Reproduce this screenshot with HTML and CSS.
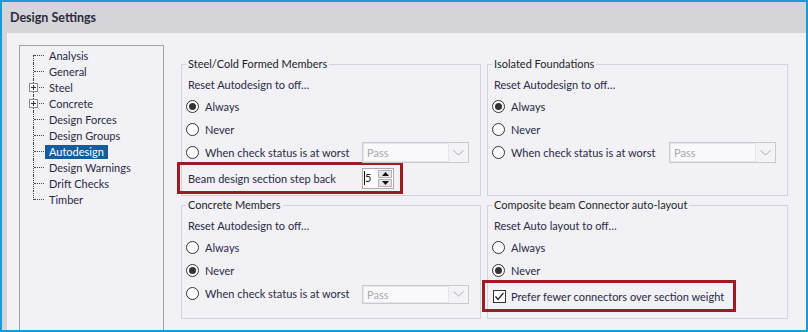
FILE: index.html
```html
<!DOCTYPE html>
<html>
<head>
<meta charset="utf-8">
<link rel="stylesheet" href="styles.css">
</head>
<body>
<div class="window">
  <div class="titlebar">Design Settings</div>
  <div class="content">
    <div class="tree">
      <ul class="tree-list">
        <li class="tree-item"><span class="tree-label">Analysis</span></li>
        <li class="tree-item"><span class="tree-label">General</span></li>
        <li class="tree-item has-children"><span class="expander"></span><span class="tree-label">Steel</span></li>
        <li class="tree-item has-children"><span class="expander"></span><span class="tree-label">Concrete</span></li>
        <li class="tree-item"><span class="tree-label">Design Forces</span></li>
        <li class="tree-item"><span class="tree-label">Design Groups</span></li>
        <li class="tree-item"><span class="tree-label selected">Autodesign</span></li>
        <li class="tree-item"><span class="tree-label">Design Warnings</span></li>
        <li class="tree-item"><span class="tree-label">Drift Checks</span></li>
        <li class="tree-item"><span class="tree-label">Timber</span></li>
      </ul>
    </div>
    <div class="groups">
      <fieldset class="group group-top">
        <legend class="group-title">Steel/Cold Formed Members</legend>
        <div class="caption">Reset Autodesign to off…</div>
        <div class="option"><span class="radio checked"></span><span class="opt-label">Always</span></div>
        <div class="option"><span class="radio"></span><span class="opt-label">Never</span></div>
        <div class="option"><span class="radio"></span><span class="opt-label">When check status is at worst</span>
          <div class="combo"><span class="combo-field">Pass</span><span class="combo-btn"><svg width="11" height="6" viewBox="0 0 11 6"><polyline points="0.5,0.5 5.5,5 10.5,0.5" fill="none" stroke="#a9a9b0" stroke-width="1"/></svg></span></div>
        </div>
        <div class="highlight highlight-left">
          <span class="hl-label">Beam design section step back</span>
          <div class="spin">
            <span class="spin-value"><span class="caret"></span>5</span>
            <span class="spin-btns">
              <span class="spin-btn"><svg width="7" height="4" viewBox="0 0 7 4"><polygon points="3.5,0 7,4 0,4" fill="#111"/></svg></span>
              <span class="spin-btn"><svg width="7" height="4" viewBox="0 0 7 4"><polygon points="0,0 7,0 3.5,4" fill="#111"/></svg></span>
            </span>
          </div>
        </div>
      </fieldset>

      <fieldset class="group group-top">
        <legend class="group-title">Isolated Foundations</legend>
        <div class="caption">Reset Autodesign to off…</div>
        <div class="option"><span class="radio checked"></span><span class="opt-label">Always</span></div>
        <div class="option"><span class="radio"></span><span class="opt-label">Never</span></div>
        <div class="option"><span class="radio"></span><span class="opt-label">When check status is at worst</span>
          <div class="combo"><span class="combo-field">Pass</span><span class="combo-btn"><svg width="11" height="6" viewBox="0 0 11 6"><polyline points="0.5,0.5 5.5,5 10.5,0.5" fill="none" stroke="#a9a9b0" stroke-width="1"/></svg></span></div>
        </div>
      </fieldset>

      <fieldset class="group">
        <legend class="group-title">Concrete Members</legend>
        <div class="caption">Reset Autodesign to off…</div>
        <div class="option"><span class="radio"></span><span class="opt-label">Always</span></div>
        <div class="option"><span class="radio checked"></span><span class="opt-label">Never</span></div>
        <div class="option"><span class="radio"></span><span class="opt-label">When check status is at worst</span>
          <div class="combo combo-short"><span class="combo-field">Pass</span><span class="combo-btn"><svg width="11" height="6" viewBox="0 0 11 6"><polyline points="0.5,0.5 5.5,5 10.5,0.5" fill="none" stroke="#a9a9b0" stroke-width="1"/></svg></span></div>
        </div>
      </fieldset>

      <fieldset class="group">
        <legend class="group-title">Composite beam Connector auto-layout</legend>
        <div class="caption">Reset Auto layout to off…</div>
        <div class="option"><span class="radio"></span><span class="opt-label">Always</span></div>
        <div class="option"><span class="radio checked"></span><span class="opt-label">Never</span></div>
        <div class="highlight highlight-right">
          <span class="checkbox"><svg width="11" height="11" viewBox="0 0 11 11"><polyline points="1.5,5.5 4,8.5 9.5,2" fill="none" stroke="#222" stroke-width="1.2"/></svg></span>
          <span class="cb-label">Prefer fewer connectors over section weight</span>
        </div>
      </fieldset>
    </div>
  </div>
</div>
</body>
</html>
```

FILE: styles.css
```css
* { box-sizing: border-box; }

html, body {
  margin: 0;
  padding: 0;
  background: #f1f1f6;
}

body {
  font-family: Lato, "Noto Sans", sans-serif;
  font-size: 11px;
  color: #2a2a44;
}

.window {
  width: 808px;
  height: 332px;
  border: 2px solid #1a9ad8;
  background: #d4d4d9;
  display: flex;
  flex-direction: column;
  overflow: hidden;
}

.titlebar {
  height: 31px;
  flex: none;
  display: flex;
  align-items: center;
  padding-left: 8px;
  font-weight: bold;
  font-size: 12.5px;
  color: #2b2b3e;
}

.content {
  flex: 1;
  margin-left: 5px;
  background: #f1f1f6;
  display: flex;
  align-items: stretch;
  min-height: 0;
}

/* Tree */
.tree {
  width: 145px;
  margin: 12px 0 -10px 12px;
  border: 1px solid #a2a2a6;
  border-bottom: none;
  flex: none;
}

.tree-list {
  list-style: none;
  margin: 0;
  padding: 1px 0 0 0;
}

.tree-item {
  position: relative;
  height: 16px;
  line-height: 16px;
  padding-left: 25px;
}

.tree-item::before {
  content: "";
  position: absolute;
  left: 13px;
  top: 0;
  bottom: 0;
  border-left: 1px dotted #444;
}

.tree-item:first-child::before { top: 8px; }
.tree-item:last-child::before { bottom: 7px; }

.tree-item::after {
  content: "";
  position: absolute;
  left: 14px;
  width: 10px;
  top: 8px;
  border-top: 1px dotted #444;
}

.expander {
  position: absolute;
  left: 9px;
  top: 4px;
  width: 9px;
  height: 9px;
  border: 1px solid #8a8a8e;
  background: #fff;
  z-index: 1;
}

.expander::before,
.expander::after {
  content: "";
  position: absolute;
  background: #333;
}
.expander::before { left: 1px; right: 1px; top: 3px; height: 1px; }
.expander::after { top: 1px; bottom: 1px; left: 3px; width: 1px; }

.tree-label {
  display: inline-block;
  padding: 0 4px;
  line-height: 14px;
  vertical-align: middle;
}

.tree-label.selected {
  background: #155c9c;
  color: #fff;
}

/* Groups */
.groups {
  margin-left: 17px;
  padding-top: 23px;
  display: grid;
  grid-template-columns: 300px 301px;
  grid-template-rows: 140px 122px;
  column-gap: 6px;
  row-gap: 1px;
  align-content: start;
}

.group {
  margin: 0;
  padding: 0 6px;
  border: 1px solid #d3d3da;
  min-width: 0;
  color: #2a2a44;
}

.group-title {
  padding: 0 2px;
  margin-left: -2px;
  line-height: 16px;
  color: #1e1e2a;
}

.caption {
  margin-top: 5px;
  height: 16px;
  line-height: 16px;
}

.option {
  display: flex;
  align-items: center;
  height: 23px;
}

.caption + .option { margin-top: 2px; }

.radio {
  width: 13px;
  height: 13px;
  border-radius: 50%;
  border: 1px solid #333;
  background: #fff;
  flex: none;
  margin-left: -2px;
  margin-right: 6px;
  display: flex;
  align-items: center;
  justify-content: center;
}

.radio.checked::after {
  content: "";
  width: 7px;
  height: 7px;
  border-radius: 50%;
  background: #333;
}

.opt-label { white-space: nowrap; }

.combo {
  margin-left: auto;
  margin-right: 5px;
  width: 107px;
  height: 21px;
  border: 1px solid #c9c9ce;
  display: flex;
  background: #f3f3f7;
}

.combo-short { height: 19px; margin-top: 1px; }

.combo-field {
  flex: 1;
  border: 1px solid #e4e4ea;
  background: #f9f9fb;
  color: #a8a8b0;
  padding-left: 3px;
  display: flex;
  align-items: center;
}

.combo-btn {
  width: 19px;
  display: flex;
  align-items: center;
  justify-content: center;
}

.highlight {
  border: 3px solid #9c1c24;
  height: 32px;
  display: flex;
  align-items: center;
  margin-top: -2px;
}

.highlight-left {
  width: 226px;
  margin-left: -11px;
  padding-left: 8px;
}

.hl-label {
  width: 174px;
  flex: none;
  white-space: nowrap;
}

.spin {
  width: 32px;
  height: 21px;
  border: 1px solid #ababb0;
  background: #fff;
  display: flex;
  align-items: center;
  margin-top: 0;
}

.spin-value {
  flex: 1;
  position: relative;
  color: #222;
  padding-left: 2px;
  line-height: 14px;
}

.caret {
  position: absolute;
  left: 1px;
  top: 0;
  bottom: 0;
  width: 1px;
  background: #111;
}

.spin-btns {
  display: flex;
  flex-direction: column;
  gap: 1px;
  margin-right: 1px;
}

.spin-btn {
  width: 14px;
  height: 8px;
  border: 1px solid #b4b4b8;
  background: #e6e6ea;
  display: flex;
  align-items: center;
  justify-content: center;
}

.highlight-right {
  width: 254px;
  margin-left: -12px;
  padding-left: 8px;
}

.checkbox {
  width: 13px;
  height: 13px;
  border: 1px solid #333;
  background: #fff;
  flex: none;
  display: flex;
  align-items: center;
  justify-content: center;
  margin-right: 5px;
}

.cb-label { white-space: nowrap; }
```
